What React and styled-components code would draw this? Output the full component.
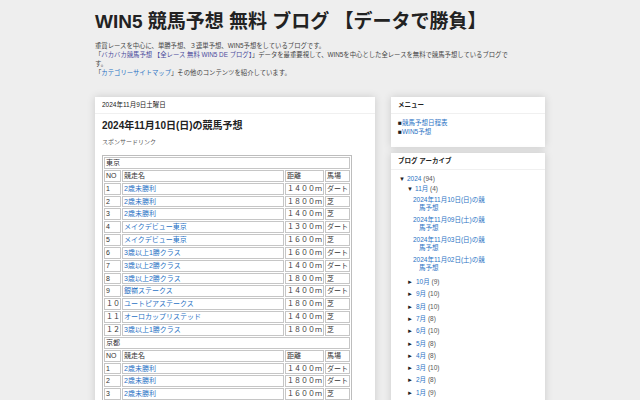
import React from "react";
import styled, { createGlobalStyle } from "styled-components";

const GlobalStyle = createGlobalStyle`
  body {
    margin: 0;
    background: #eeeeee;
    font-family: "Liberation Sans", "Noto Sans CJK JP", sans-serif;
    color: #222;
  }
`;

const Page = styled.div`
  width: 450px;
  margin: 0 auto;
`;

const Header = styled.header`
  padding: 10px 0 20px;
`;

const Title = styled.h1`
  margin: 0;
  font-size: 19px;
  line-height: 24px;
  font-weight: 700;
  color: #222;
`;

const Description = styled.div`
  margin-top: 7px;
  width: 417px;
  font-size: 6.35px;
  line-height: 9px;
  color: #444;
`;

const A = styled.a`
  color: ${p => (p.$visited ? "#4a4a9c" : "#2a72c4")};
  text-decoration: none;
`;

const Columns = styled.div`
  display: flex;
  gap: 16px;
  align-items: flex-start;
`;

const Card = styled.section`
  background: #fff;
  box-shadow: 0 0 8px rgba(0, 0, 0, 0.15);
  width: ${p => p.$width}px;
`;

const CardHead = styled.div`
  padding: 0 7px;
  height: 16px;
  line-height: 16px;
  font-size: 6.5px;
  border-bottom: 1px solid #f0f0f0;
  color: #222;
  font-weight: ${p => (p.$bold ? 700 : 400)};
`;

const CardBody = styled.div`
  padding: ${p => p.$pad || "5px 7px 10px"};
`;

const PostTitle = styled.h3`
  margin: 0;
  font-size: 10px;
  line-height: 14px;
  font-weight: 700;
`;

const Sponsor = styled.div`
  margin-top: 5px;
  font-size: 6px;
  line-height: 8px;
  color: #555;
`;

const RaceTable = styled.table`
  margin-top: 9px;
  width: 250px;
  border: 1px solid #bdbdbd;
  border-spacing: 1px;
  font-size: 7px;
  line-height: 9.85px;
  table-layout: fixed;
`;

const Td = styled.td`
  border: 1px solid #c6c6c6;
  padding: 0 0 0 1px;
  white-space: nowrap;
  overflow: hidden;
  color: #333;
`;

const Side = styled.div`
  display: flex;
  flex-direction: column;
  gap: 6px;
`;

const MenuList = styled.div`
  font-size: 6.5px;
  line-height: 9px;
`;

const Tree = styled.ul`
  list-style: none;
  margin: 0;
  padding: ${p => (p.$root ? "0 0 4px 1px" : "0 0 0 8px")};
  font-size: 6.5px;
`;

const Node = styled.li`
  line-height: 8px;
  padding: ${p => (p.$leaf ? "2.2px 0 2.1px" : "2px 0 1px")};
  color: #555;
`;

const Toggle = styled.span`
  display: inline-block;
  width: ${p => (p.$closed ? 9 : 8)}px;
  font-size: 6px;
  color: #222;
`;

const Posts = styled.ul`
  list-style: none;
  margin: 2px 0 0;
  padding: 0 0 0 6px;
`;

const PostItem = styled.li`
  padding: 1px 0 3px 6px;
  text-indent: -6px;
  line-height: 8px;
  width: 66px;
`;

const tokyo = [
  ["1", "2歳未勝利", "１４００ｍ", "ダート"],
  ["2", "2歳未勝利", "１８００ｍ", "芝"],
  ["3", "2歳未勝利", "１４００ｍ", "芝"],
  ["4", "メイクデビュー東京", "１３００ｍ", "ダート"],
  ["5", "メイクデビュー東京", "１６００ｍ", "芝"],
  ["6", "3歳以上1勝クラス", "１６００ｍ", "ダート"],
  ["7", "3歳以上2勝クラス", "１４００ｍ", "ダート"],
  ["8", "3歳以上2勝クラス", "１８００ｍ", "芝"],
  ["9", "銀嶺ステークス", "１４００ｍ", "ダート"],
  ["１０", "ユートピアステークス", "１８００ｍ", "芝"],
  ["１１", "オーロカップリステッド", "１４００ｍ", "芝"],
  ["１２", "3歳以上1勝クラス", "１８００ｍ", "芝"]
];

const kyoto = [
  ["1", "2歳未勝利", "１４００ｍ", "ダート"],
  ["2", "2歳未勝利", "１８００ｍ", "ダート"],
  ["3", "2歳未勝利", "１６００ｍ", "芝"],
  ["4", "2歳未勝利", "１２００ｍ", "ダート"]
];

const months = [
  ["10月", 9], ["9月", 10], ["8月", 10], ["7月", 8], ["6月", 10],
  ["5月", 8], ["4月", 8], ["3月", 10], ["2月", 8], ["1月", 9]
];

const novPosts = [
  "2024年11月10日(日)の競馬予想",
  "2024年11月09日(土)の競馬予想",
  "2024年11月03日(日)の競馬予想",
  "2024年11月02日(土)の競馬予想"
];

const Venue = ({ name, rows }) => (
  <>
    <tr>
      <Td colSpan={4}>{name}</Td>
    </tr>
    <tr>
      <Td>NO</Td>
      <Td>競走名</Td>
      <Td>距離</Td>
      <Td>馬場</Td>
    </tr>
    {rows.map(r => (
      <tr key={name + r[0]}>
        <Td>{r[0]}</Td>
        <Td>
          <A href="#">{r[1]}</A>
        </Td>
        <Td>{r[2]}</Td>
        <Td>{r[3]}</Td>
      </tr>
    ))}
  </>
);

export default function App() {
  return (
    <Page>
      <GlobalStyle />
      <Header>
        <Title>WIN5 競馬予想 無料 ブログ 【データで勝負】</Title>
        <Description>
          重賞レースを中心に、単勝予想、３連単予想、WIN5予想をしているブログです。
          <br />
          「<A href="#" $visited>バカバカ競馬予想 【全レース 無料 WIN5 DE ブログ】</A>」データを最重要視して、WIN5を中心とした全レースを無料で競馬予想しているブログです。
          <br />
          「<A href="#">カテゴリーサイトマップ</A>」その他のコンテンツを紹介しています。
        </Description>
      </Header>
      <Columns>
        <Card $width={280}>
          <CardHead>2024年11月9日土曜日</CardHead>
          <CardBody>
            <PostTitle>2024年11月10日(日)の競馬予想</PostTitle>
            <Sponsor>スポンサードリンク</Sponsor>
            <RaceTable>
              <colgroup>
                <col style={{ width: 17 }} />
                <col />
                <col style={{ width: 39 }} />
                <col style={{ width: 25 }} />
              </colgroup>
              <tbody>
                <Venue name="東京" rows={tokyo} />
                <Venue name="京都" rows={kyoto} />
              </tbody>
            </RaceTable>
          </CardBody>
        </Card>
        <Side>
          <Card $width={154}>
            <CardHead $bold>メニュー</CardHead>
            <CardBody $pad="4px 7px 11px">
              <MenuList>
                ■<A href="#">競馬予想日程表</A>
                <br />
                ■<A href="#">WIN5予想</A>
              </MenuList>
            </CardBody>
          </Card>
          <Card $width={154}>
            <CardHead $bold>ブログ アーカイブ</CardHead>
            <CardBody $pad="3px 7px 10px">
              <Tree $root>
                <Node>
                  <Toggle>▼</Toggle>
                  <A href="#">2024</A> (94)
                  <Tree>
                    <Node>
                      <Toggle>▼</Toggle>
                      <A href="#">11月</A> (4)
                      <Posts>
                        {novPosts.map(p => (
                          <PostItem key={p}>
                            <A href="#">{p}</A>
                          </PostItem>
                        ))}
                      </Posts>
                    </Node>
                    {months.map(([m, n]) => (
                      <Node key={m} $leaf>
                        <Toggle $closed>►</Toggle>
                        <A href="#">{m}</A> ({n})
                      </Node>
                    ))}
                  </Tree>
                </Node>
              </Tree>
            </CardBody>
          </Card>
        </Side>
      </Columns>
    </Page>
  );
}
